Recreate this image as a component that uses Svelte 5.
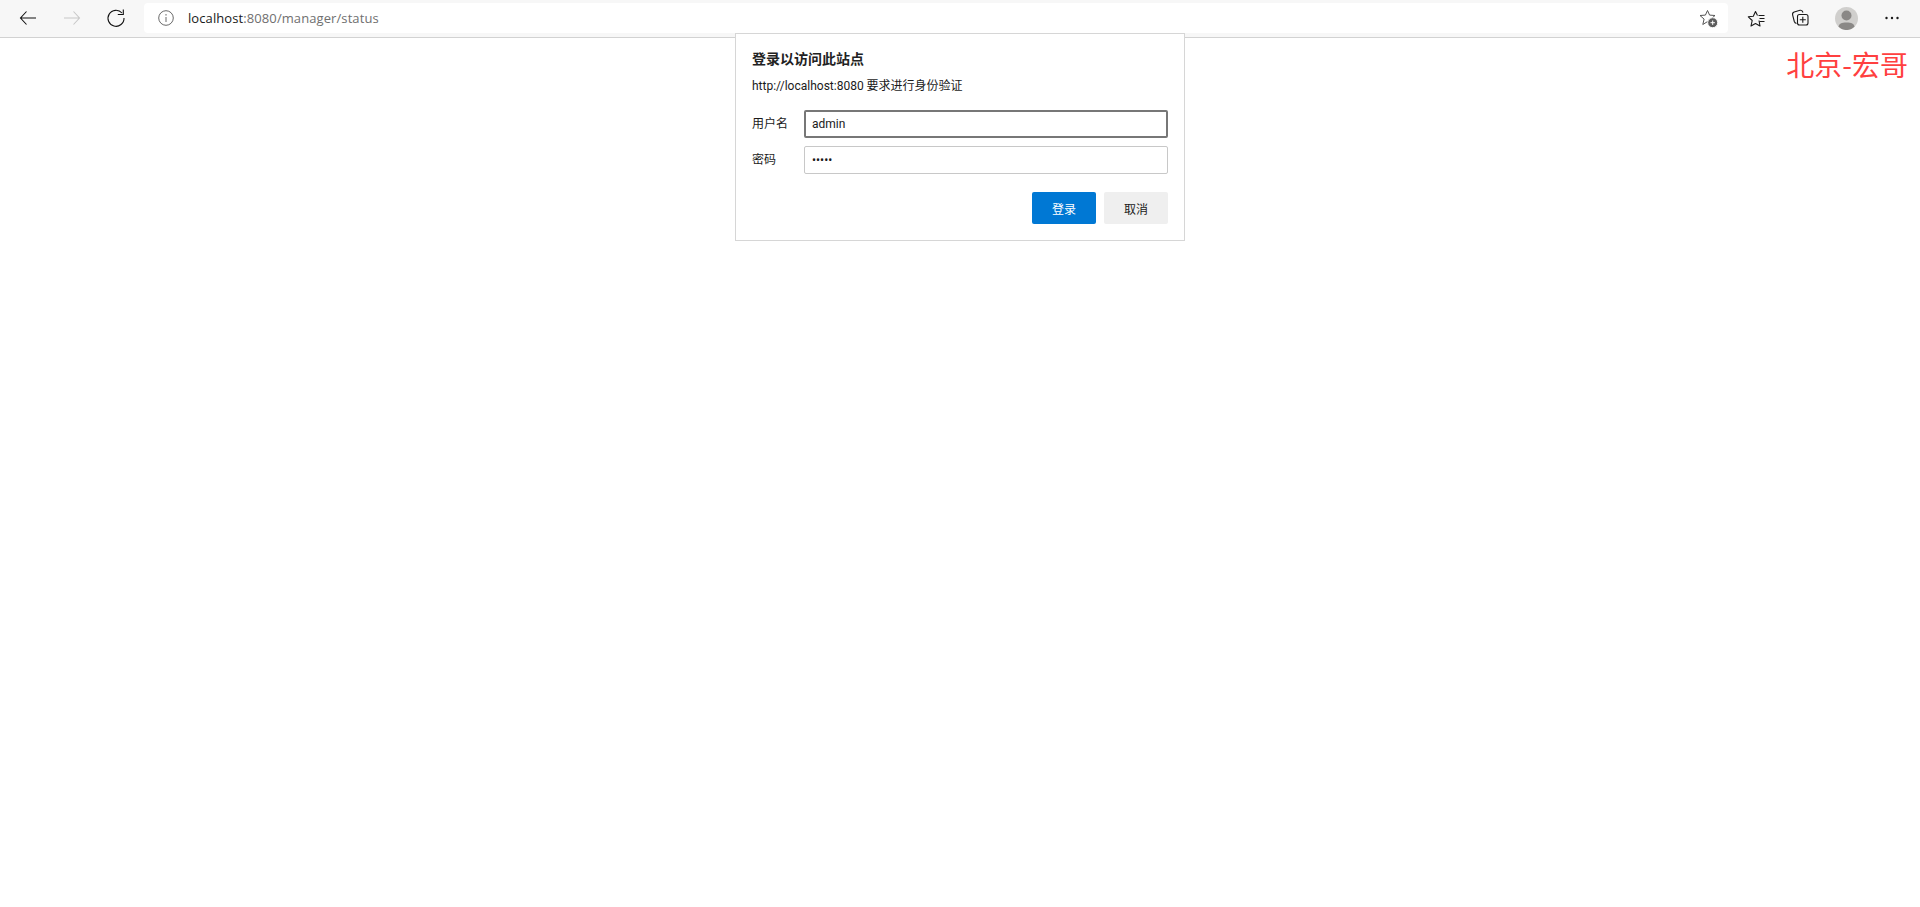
<script>
  const iconStroke = '#1a1a1a';
</script>

<div class="page">
  <header class="toolbar">
    <button class="nav back" aria-label="Back">
      <svg width="20" height="20" viewBox="0 0 20 20" fill="none" stroke="#111" stroke-width="1.1"><path d="M18 10H2.500M8.500 3.500 2.500 10l6 6.500"/></svg>
    </button>
    <button class="nav forward" aria-label="Forward">
      <svg width="20" height="20" viewBox="0 0 20 20" fill="none" stroke="#c8c8c8" stroke-width="1.1"><path d="M2 10h15.500M11.500 3.500l6 6.500-6 6.500"/></svg>
    </button>
    <button class="nav reload" aria-label="Reload">
      <svg width="20" height="20" viewBox="0 0 20 20" fill="none" stroke="#111" stroke-width="1.1"><path d="M16 5A8 8 0 1 0 18 10"/><path d="M17.300 1.500v5h-5.500"/></svg>
    </button>
    <div class="address">
      <svg class="info" width="16" height="16" viewBox="0 0 16 16" fill="none" stroke="#6a6a6a"><circle cx="8" cy="8" r="7.300"/><path d="M8 7v5M8 4v1.600"/></svg>
      <span class="url"><span class="host">localhost</span>:8080/manager/status</span>
      <svg class="fav-add" width="20" height="20" viewBox="0 0 20 20" fill="none" stroke="#555" stroke-linejoin="round"><path d="M9.500 2.500 11.600 7.100 17 7.500 12.900 11.100 14.200 16.500 9.500 13.600 4.800 16.500 6.100 11.100 2 7.500 7.400 7.100z"/><circle cx="14.700" cy="14.700" r="5" fill="#5c5c5c" stroke="#f7f7f7"/><path d="M12.500 14.700h4.400M14.700 12.500v4.400" stroke="#fff"/></svg>
    </div>
    <div class="actions">
      <span class="action fav">
        <svg width="20" height="20" viewBox="0 0 20 20" fill="none" stroke={iconStroke} stroke-width="1.100" stroke-linejoin="round"><path d="M10.500 7.500 8.500 3.500 6.300 8.300 1.300 8.800 5.200 12.500 4 18 8.500 15.500 13 18 12 12.500"/><path d="M11.500 7.500h6M12.500 10.500h5M12.500 13.500h5"/></svg>
      </span>
      <span class="action coll">
        <svg width="20" height="20" viewBox="0 0 20 20" fill="none" stroke={iconStroke} stroke-width="1.100"><path d="M6.500 15.500C5 15.200 4.600 14.500 4.300 13.500L2.600 7C2.300 5.500 2.800 4.500 4.200 4L10 2.300C11.500 2 12.500 2.600 13 4.500"/><rect x="7.500" y="6.500" width="10.500" height="10.500" rx="2"/><path d="M12.800 8.800v6M9.800 11.800h6"/></svg>
      </span>
      <span class="avatar">
        <svg width="23" height="23" viewBox="0 0 23 23"><circle cx="11.500" cy="11.500" r="11.500" fill="#d0cfcd"/><circle cx="11.500" cy="8.500" r="5" fill="#8a8886"/><path d="M3.500 19.800c.5-3 3-4.300 8-4.300s7.500 1.300 8 4.300a11.500 11.500 0 0 1-16 0z" fill="#8a8886"/></svg>
      </span>
      <span class="action more">
        <svg width="16" height="16" viewBox="0 0 16 16" fill="#1a1a1a"><circle cx="2.500" cy="8" r="1.200"/><circle cx="8" cy="8" r="1.200"/><circle cx="13.500" cy="8" r="1.200"/></svg>
      </span>
    </div>
  </header>

  <form class="dialog">
    <h1>登录以访问此站点</h1>
    <p>http://localhost:8080 要求进行身份验证</p>
    <div class="row first">
      <label for="user">用户名</label>
      <input id="user" class="focused" value="admin" />
    </div>
    <div class="row">
      <label for="pass">密码</label>
      <input id="pass" type="password" value="admin" />
    </div>
    <div class="buttons">
      <button type="button" class="btn primary">登录</button>
      <button type="button" class="btn">取消</button>
    </div>
  </form>

  <div class="mark">北京-宏哥</div>
</div>

<style>
  :global(body) {
    margin: 0;
    background: #fff;
  }
  .page {
    position: relative;
    height: 907px;
    overflow: hidden;
    background: #fff;
    font-family: "Open Sans", "Noto Sans CJK SC", sans-serif;
  }
  .toolbar {
    display: flex;
    align-items: center;
    box-sizing: border-box;
    height: 38px;
    padding-bottom: 1px;
    background: #f7f7f7;
    border-bottom: 1px solid #d2d2d2;
  }
  .nav {
    display: flex;
    align-items: center;
    justify-content: center;
    flex: none;
    width: 20px;
    height: 20px;
    padding: 0;
    border: 0;
    background: none;
  }
  .back { margin-left: 18px; }
  .forward { margin-left: 24px; }
  .reload { margin-left: 24px; }
  .address {
    display: flex;
    align-items: center;
    box-sizing: border-box;
    flex: none;
    width: 1584px;
    height: 30px;
    margin-left: 18px;
    padding: 0 5px 0 14px;
    background: #fff;
    border-radius: 4px;
  }
  .url {
    margin-left: 14px;
    font-size: 13px;
    letter-spacing: 0.09px;
    color: #6f6f6f;
    font-family: "Open Sans", sans-serif;
  }
  .host { color: #1a1a1a; }
  .fav-add { margin-left: auto; margin-right: 5px; }
  .actions {
    display: flex;
    align-items: center;
    margin-left: 19px;
  }
  .action, .avatar { display: flex; flex: none; }
  .coll { margin-left: 23px; }
  .avatar { margin-left: 25px; }
  .more { margin-left: 26px; }
  .dialog {
    position: absolute;
    left: 735px;
    top: 33px;
    box-sizing: border-box;
    width: 450px;
    height: 208px;
    padding: 16px;
    background: #fff;
    border: 1px solid #d6d6d6;
    color: #1a1a1a;
    font-family: Roboto, "Noto Sans CJK SC", sans-serif;
    font-size: 12px;
  }
  h1 {
    margin: 0;
    font-size: 14px;
    line-height: 18px;
    font-weight: 700;
    color: #222;
  }
  p {
    margin: 10px 0 0;
    line-height: 16px;
  }
  .row {
    display: flex;
    align-items: center;
    margin-top: 8px;
  }
  .row.first { margin-top: 16px; }
  label { width: 52px; flex: none; line-height: 16px; padding-bottom: 1px; }
  input {
    box-sizing: border-box;
    width: 364px;
    height: 28px;
    padding: 0 7px;
    border: 1px solid #c8c8c8;
    border-radius: 2px;
    font: inherit;
    color: #1a1a1a;
    outline: none;
  }
  input.focused {
    border: 2px solid #777;
    padding: 0 6px;
  }
  .buttons {
    display: flex;
    justify-content: flex-end;
    gap: 8px;
    margin-top: 18px;
  }
  .btn {
    width: 64px;
    height: 32px;
    padding: 0;
    border: 0;
    border-radius: 2px;
    background: #efefef;
    color: #1a1a1a;
    font: inherit;
  }
  .btn.primary {
    background: #0078d4;
    color: #fff;
  }
  .mark {
    position: absolute;
    top: 45px;
    right: 12px;
    font-family: "Noto Sans CJK SC", sans-serif;
    font-size: 28px;
    line-height: 38px;
    color: #ff4040;
  }
</style>
